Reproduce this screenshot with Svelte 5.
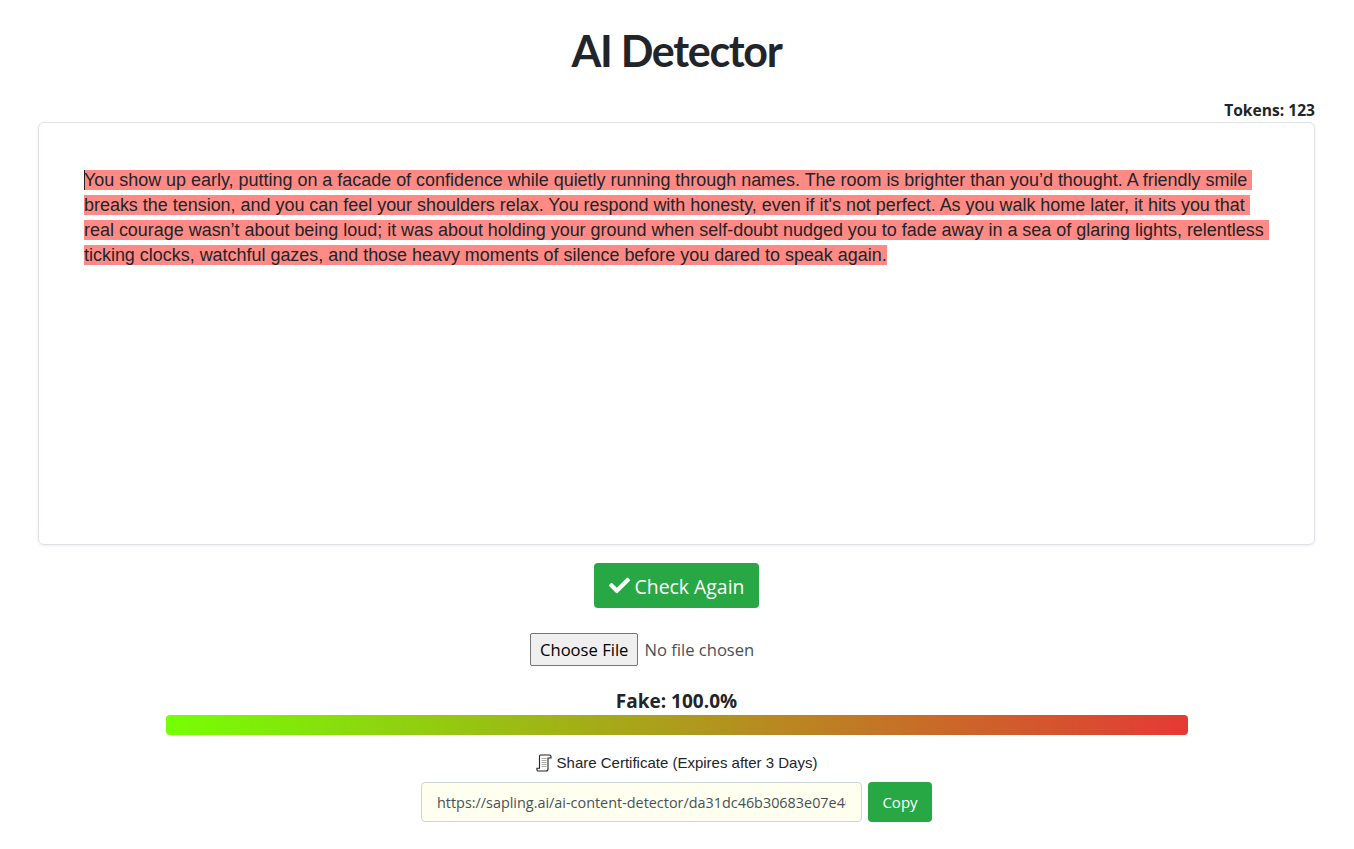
<script>
    const text =
        "You show up early, putting on a facade of confidence while quietly running through names. The room is brighter than you’d thought. A friendly smile breaks the tension, and you can feel your shoulders relax. You respond with honesty, even if it's not perfect. As you walk home later, it hits you that real courage wasn’t about being loud; it was about holding your ground when self-doubt nudged you to fade away in a sea of glaring lights, relentless ticking clocks, watchful gazes, and those heavy moments of silence before you dared to speak again.";
    const tokens = 123;
    const fake = 100.0;
    const shareUrl = "https://sapling.ai/ai-content-detector/da31dc46b30683e07e40c1f2a9";
</script>

<main>
    <h1>AI Detector</h1>

    <div class="tokens">Tokens: {tokens}</div>
    <div class="editor"><span class="caret"></span><span class="hl">{text}</span></div>

    <button class="btn check">
        <svg viewBox="0 0 512 512" width="21" height="21" aria-hidden="true">
            <path
                fill="currentColor"
                d="M173.898 439.404l-166.4-166.4c-9.997-9.997-9.997-26.206 0-36.204l36.203-36.204c9.997-9.998 26.207-9.998 36.204 0L192 312.69 432.095 72.596c9.997-9.997 26.207-9.997 36.204 0l36.203 36.204c9.997 9.997 9.997 26.206 0 36.204l-294.4 294.401c-9.998 9.997-26.207 9.997-36.204-.001z"
            />
        </svg>
        <span class="label">Check Again</span>
    </button>

    <div class="upload"><input type="file" /></div>

    <div class="score">Fake: {fake.toFixed(1)}%</div>
    <div class="bar"></div>

    <div class="share">
        <svg viewBox="0 0 16 18" width="16" height="18" aria-hidden="true">
            <path
                fill="#fff"
                stroke="#222"
                stroke-width="1.1"
                d="M4.5 1h9c1 0 1.5.7 1.5 1.6V4h-3v11c0 1.2-.8 2-2 2H2.5c-1 0-1.6-.7-1.6-1.6V14.2h2.6V2.6c0-.9.2-1.6 1-1.6z"
            />
            <path stroke="#aaa" stroke-width="1" d="M5.5 4.5h5M5.5 6.5h5M5.5 8.5h5M5.5 10.5h5M5.5 12.5h5" />
        </svg>
        Share Certificate (Expires after 3 Days)
    </div>
    <div class="link">
        <input type="text" readonly value={shareUrl} />
        <button class="btn copy">Copy</button>
    </div>
</main>

<style>
    :global(body) {
        background: #fff;
        color: #212529;
        font-family: "Open Sans", "Noto Sans", sans-serif;
    }
    main {
        display: flex;
        flex-direction: column;
        align-items: center;
        padding: 0 39px 0 38px;
    }
    h1 {
        margin: 24px 0 0;
        font-family: Lato, sans-serif;
        font-size: 43px;
        line-height: 53px;
        font-weight: 700;
        letter-spacing: -1.3px;
    }
    .tokens {
        align-self: flex-end;
        margin-top: 24px;
        font-size: 15.6px;
        line-height: 18px;
        font-weight: 700;
    }
    .editor {
        box-sizing: border-box;
        width: 100%;
        height: 423px;
        margin-top: 3px;
        padding: 45px;
        border: 1px solid #dee2e6;
        border-radius: 6px;
        box-shadow: 0 1px 3px rgba(0, 0, 0, 0.08);
        font-family: "Liberation Sans", Arial, sans-serif;
        font-size: 17.94px;
        line-height: 25px;
        white-space: pre-wrap;
    }
    .hl {
        background: #ff8a85;
    }
    .caret {
        display: inline-block;
        position: relative;
        z-index: 1;
        width: 1px;
        height: 20px;
        margin-right: -1px;
        vertical-align: -4px;
        background: #212529;
    }
    .btn {
        border: none;
        border-radius: 4px;
        background: #28a745;
        color: #fff;
        font-family: inherit;
    }
    .check {
        display: flex;
        align-items: center;
        gap: 5px;
        height: 45px;
        margin-top: 18px;
        padding: 0 15px;
        font-size: 19.4px;
    }
    .label {
        padding-top: 2px;
    }
    .upload {
        height: 33px;
        margin-top: 25px;
    }
    .upload input {
        width: 293px;
        color: #495057;
        font-family: inherit;
        font-size: 16.6px;
    }
    .upload input::file-selector-button {
        height: 33px;
        margin-right: 6px;
        padding: 0 9px;
        border: 1px solid #767676;
        border-radius: 2px;
        background: #efefef;
        color: #000;
        font-family: inherit;
        font-size: 16.6px;
    }
    .score {
        margin-top: 23px;
        margin-bottom: 2px;
        font-size: 19px;
        line-height: 24px;
        font-weight: 700;
    }
    .bar {
        width: 1022px;
        height: 20px;
        border-radius: 4px;
        background: linear-gradient(to right, #76ff03, #e53935);
    }
    .share {
        display: flex;
        align-items: center;
        gap: 5px;
        margin-top: 18px;
        font-family: "Liberation Sans", Arial, sans-serif;
        font-size: 15px;
        line-height: 20px;
    }
    .link {
        display: flex;
        gap: 6px;
        margin-top: 9px;
    }
    .link input {
        box-sizing: border-box;
        width: 441px;
        height: 40px;
        padding: 0 15px;
        border: 1px solid #ced4da;
        border-radius: 4px;
        background: #fffff0;
        color: #495057;
        font-family: inherit;
        font-size: 14.4px;
    }
    .copy {
        width: 64px;
        height: 40px;
        font-size: 15px;
    }
</style>
